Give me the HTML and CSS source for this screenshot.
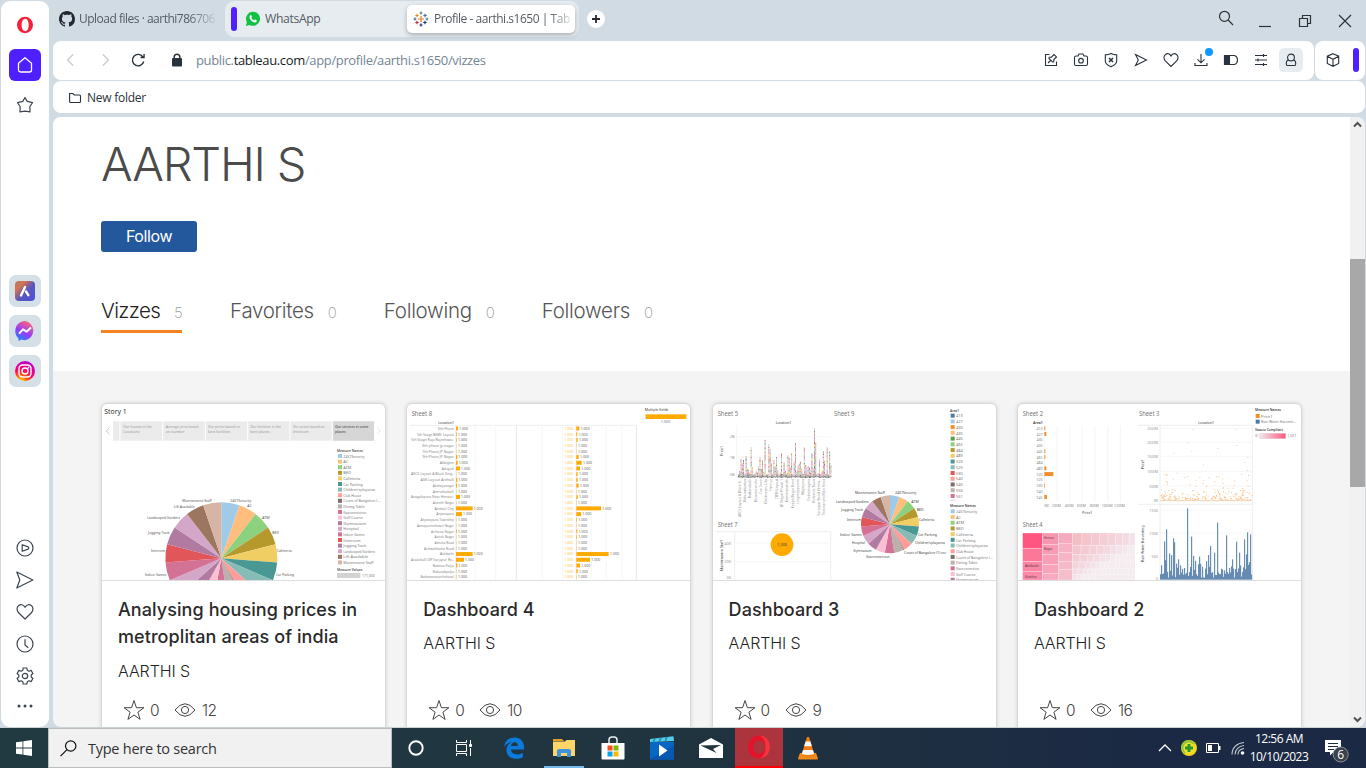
FILE: index.html
```html
<!DOCTYPE html>
<html lang="en">
<head>
<meta charset="utf-8">
<title>Profile - aarthi.s1650 | Tableau Public</title>
<link rel="stylesheet" href="styles.css">
</head>
<body>
<div class="desktop">
  <div class="browser">
    <nav class="sidebar">
      <div class="side-item opera"><svg width="18" height="18" viewBox="0 0 18 18"><path fill="#fa1e38" fill-rule="evenodd" d="M9 .8a8 8.2 0 1 0 0 16.4A8 8.2 0 0 0 9 .8zM9.3 2.8c2 0 3.400 2.700 3.400 6.200s-1.400 6.200-3.400 6.200S5.600 12.500 5.600 9 7.300 2.800 9.300 2.800z"/></svg></div>
      <div class="side-item home"><svg width="18" height="18" viewBox="0 0 18 18" fill="none" stroke="#fff" stroke-width="1.300"><path d="M2.500 7.300 9 1.700l6.500 5.600v6.700a2 2 0 0 1-2 2h-9a2 2 0 0 1-2-2z" stroke-linejoin="round"/></svg></div>
      <div class="side-item pin"><svg width="18" height="18" viewBox="0 0 18 18" fill="none" stroke="#3d4650" stroke-width="1.200" stroke-linejoin="round"><path d="M9 1.500 11.200 5.400 16.500 6.700 13.900 10.500 14 15.900 9 15.100 4 15.900 4.100 10.500 1.500 6.700 6.800 5.400z"/></svg></div>
      <div class="apps">
        <div class="app"><svg width="20" height="20" viewBox="0 0 20 20"><defs><linearGradient id="aria" x1="0" y1="0" x2="1" y2="1"><stop offset="0" stop-color="#a08071"/><stop offset=".25" stop-color="#d7734f"/><stop offset=".55" stop-color="#5b57bd"/><stop offset="1" stop-color="#4b4de0"/></linearGradient></defs><rect width="20" height="20" rx="4" fill="url(#aria)"/><path d="M6 14.500 10 6M11 10.500l2.300 3.700" stroke="#fff" stroke-width="2.400" stroke-linecap="round"/></svg></div>
        <div class="app"><svg width="20" height="20" viewBox="0 0 20 20"><defs><linearGradient id="msgr" x1=".2" y1="1" x2=".7" y2="0"><stop offset="0" stop-color="#168aff"/><stop offset=".45" stop-color="#963cfa"/><stop offset="1" stop-color="#ff6678"/></linearGradient></defs><path fill="url(#msgr)" d="M10 0a9.700 9.700 0 0 1 0 19.200c-1.200 0-2.300-.2-3.300-.6L3.500 20v-2.600A9.300 9.300 0 0 1 .3 9.800C.3 4.300 4.600 0 10 0z"/><path d="m4.500 12 3.500-3.600 3.500 2.300 4-3.600" fill="none" stroke="#fff" stroke-width="2" stroke-linecap="round" stroke-linejoin="round"/></svg></div>
        <div class="app"><svg width="20" height="20" viewBox="0 0 20 20"><defs><radialGradient id="insta" cx=".3" cy="1" r="1.050"><stop offset="0" stop-color="#ffd600"/><stop offset=".25" stop-color="#ff6a00"/><stop offset=".55" stop-color="#ff0169"/><stop offset="1" stop-color="#b900d8"/></radialGradient></defs><circle cx="10" cy="10" r="10" fill="url(#insta)"/><rect x="4" y="4" width="12" height="12" rx="3.500" fill="none" stroke="#fff" stroke-width="1.400"/><circle cx="10" cy="10" r="3" fill="none" stroke="#fff" stroke-width="1.400"/><circle cx="13.500" cy="6.500" r=".9" fill="#fff"/></svg></div>
      </div>
      <div class="tools">
        <svg viewBox="0 0 18 18"><circle cx="9" cy="9" r="8"/><path d="M6.200 5.700v6.600l6-2.200q1.200-1 0-2.200z"/></svg>
        <svg viewBox="0 0 18 18"><path d="m.8 1 16 8-16 8 3-8z"/></svg>
        <svg viewBox="0 0 18 18"><path d="M9 4.300C7.300 1.200 4.500 1.300 3 2.200.3 4 .6 7.500 2.600 9.800L9 16l6.400-6.200c2-2.300 2.300-5.800-.4-7.600-1.500-.9-4.300-1-6 2.100z"/></svg>
        <svg viewBox="0 0 18 18"><circle cx="9" cy="9" r="8"/><path d="M9 4.300V10l3.300 2.800"/></svg>
        <svg viewBox="0 0 18 18"><circle cx="9" cy="9" r="2.700"/><path d="M7.200 1h3.600l.5 2.300 1.600.9 2.200-.8 1.800 3.100L15.200 8v2l1.700 1.500-1.800 3.100-2.200-.8-1.600.9-.5 2.300H7.200l-.5-2.300-1.600-.9-2.200.8-1.800-3.100L2.800 10V8L1.100 6.500l1.800-3.100 2.200.8 1.600-.9z"/></svg>
        <svg class="dots" viewBox="0 0 18 18"><circle cx="3" cy="9" r="1.500"/><circle cx="9" cy="9" r="1.500"/><circle cx="15" cy="9" r="1.500"/></svg>
      </div>
    </nav>
    <main class="window">
      <header class="tabstrip">
        <div class="tab github">
          <svg width="16" height="16" viewBox="0 0 16 16"><path fill="#24292f" d="M8 0C3.580 0 0 3.580 0 8c0 3.540 2.290 6.530 5.470 7.590.4.070.55-.17.55-.38 0-.19-.01-.82-.01-1.490-2.010.37-2.530-.49-2.690-.94-.09-.23-.48-.94-.82-1.130-.28-.15-.68-.52-.01-.53.63-.01 1.080.58 1.230.82.72 1.210 1.870.87 2.330.66.07-.52.28-.87.51-1.070-1.780-.2-3.640-.89-3.640-3.950 0-.87.31-1.590.82-2.150-.08-.2-.36-1.020.08-2.120 0 0 .67-.21 2.200.82.64-.18 1.320-.27 2-.27s1.360.09 2 .27c1.530-1.040 2.200-.82 2.200-.82.44 1.100.16 1.920.08 2.120.51.56.82 1.270.82 2.150 0 3.070-1.870 3.750-3.650 3.950.29.25.54.73.54 1.480 0 1.070-.01 1.930-.01 2.200 0 .21.15.46.55.38A8.010 8.010 0 0 0 16 8c0-4.420-3.580-8-8-8z"/></svg>
          <span class="t-github">Upload files · aarthi786706</span>
        </div>
        <div class="island">
          <i class="bar"></i>
          <div class="tab whatsapp">
            <svg width="16" height="16" viewBox="0 0 16 16"><path fill="#12c143" d="M8.200.8a7 7 0 1 1-3.400 13.200L.8 15l1.100-3.800A7 7 0 0 1 8.200.8z"/><path fill="#fff" d="M5.300 4.200c.5-.4.900-.2 1.100.3l.5 1.200c.1.400-.5.900-.6 1.100.5 1.200 1.500 2 2.700 2.600.3-.2.700-1 1.100-.9l1.500.8c.5.300 0 1.500-.8 1.900-1.100.6-2.900-.1-4.400-1.500C4.600 8 3.800 5.600 5.300 4.200z"/></svg>
            <span class="t-wa">WhatsApp</span>
          </div>
          <div class="tab active">
            <svg width="16" height="16" viewBox="0 0 16 16" fill="none" stroke-width="1.200"><path stroke="#eb7b24" d="M8 5v6M5 8h6"/><path stroke="#5c8193" d="M8 .5v3M6.500 2h3M14 6.500v3M12.500 8h3"/><path stroke="#e8931f" d="M4 2.800v3.400M2.300 4.500h3.400"/><path stroke="#47709c" d="M12 2.800v3.400M10.300 4.500h3.400M2 6.500v3M.5 8h3"/><path stroke="#c62a44" d="M4 9.800v3.400M2.300 11.500h3.400"/><path stroke="#243a78" d="M12 9.800v3.400M10.300 11.500h3.400M8 12.500v3M6.500 14h3"/></svg>
            <span class="t-active">Profile - aarthi.s1650 | Tab</span>
          </div>
        </div>
        <div class="newtab"><svg width="18" height="18" viewBox="0 0 18 18"><circle cx="9" cy="9" r="9" fill="#fff"/><path d="M9 5v8M5 9h8" stroke="#202a33" stroke-width="1.800"/></svg></div>
        <div class="controls">
          <svg class="find" width="16" height="16" viewBox="0 0 16 16"><circle cx="6.500" cy="6.300" r="5"/><path d="m10.200 10 4.800 5"/></svg>
          <svg width="14" height="14" viewBox="0 0 14 14"><path d="M1 12.500h12"/></svg>
          <svg width="14" height="14" viewBox="0 0 14 14"><path d="M1.500 4.500h8v8h-8zM4.500 4.500v-3h8v8h-3"/></svg>
          <svg width="14" height="14" viewBox="0 0 14 14"><path d="m1 1 12 12M13 1 1 13"/></svg>
        </div>
      </header>
      <section class="toolbar">
        <div class="address">
          <div class="history">
            <svg class="off" viewBox="0 0 14 14"><path d="M9 2 4 7l5 5"/></svg>
            <svg class="off" viewBox="0 0 14 14"><path d="m5 2 5 5-5 5"/></svg>
            <svg viewBox="0 0 14 14"><path d="M12 8.300A5 5 0 1 1 11.300 4.300M12.300 1.800v3H9.300"/></svg>
          </div>
          <svg class="lock" width="12" height="14" viewBox="0 0 12 14"><path d="M3.200 6V4a2.800 2.800 0 0 1 5.600 0v2" fill="none" stroke="#29333d" stroke-width="1.500"/><rect x="1" y="5" width="10" height="8.500" rx="1" fill="#29333d"/></svg>
          <div class="url">public.<b>tableau.com</b>/app/profile/aarthi.s1650/vizzes</div>
          <div class="actions">
            <svg viewBox="0 0 16 16"><path d="M6.500 2.500h-4v11h11v-4M5 11l3-3M6 6.500 9.500 10l1.300-.3V7.500l2.700-2.600-2.500-2.400-2.600 2.700H6.200z"/></svg>
            <svg viewBox="0 0 16 16"><path d="M1.500 5.500q0-1.500 1.500-1.500h2l1-2h4l1 2h2q1.500 0 1.500 1.500V12q0 1.500-1.500 1.500H3q-1.500 0-1.500-1.500z"/><circle cx="8" cy="8.700" r="2.300"/></svg>
            <svg viewBox="0 0 16 16"><path d="M8 1.500c2 1.100 4 1.400 5.700 1.400v6.300c0 2.800-3.200 4.300-5.700 5.600-2.500-1.300-5.700-2.800-5.700-5.600V2.900C4 2.900 6 2.600 8 1.500z"/><path stroke-width="1.600" d="m6 6 4 4M10 6l-4 4"/></svg>
            <svg viewBox="0 0 16 16"><path d="m2.500 2.500 11 5.500-11 5.500L5.300 8z"/></svg>
            <svg viewBox="0 0 16 16"><path d="M8 4C6.500 1.300 4.200 1.300 2.800 2.200.2 4 .6 7 2.300 8.900L8 14.400l5.700-5.500c1.700-1.900 2.100-4.900-.5-6.700-1.400-.9-3.700-.9-5.200 1.800z"/></svg>
            <span class="download"><svg viewBox="0 0 16 16"><path d="M8 2v8.500M4.500 7.300 8 10.800l3.500-3.500M2 11v2.500h12V11"/></svg><i></i></span>
            <svg viewBox="0 0 16 16"><path d="M1.500 3.500h10q3 1 3 4.500t-3 4.500h-10z"/><path fill="#29333d" d="M1.500 3.500h5v9h-5z"/></svg>
            <svg viewBox="0 0 16 16"><path d="M2 3.500h12M2 8h12M2 12.500h12M10.500 2v3M5 6.500v3M10.500 11v3"/></svg>
            <span class="user"><svg viewBox="0 0 16 16"><circle cx="8" cy="5.500" r="3.400"/><path d="M5.500 7.800C3.300 9 3 11 3.500 12.800q.2.700 1 .7h7q.8 0 1-.7c.5-1.800.2-3.800-2-5"/></svg></span>
          </div>
        </div>
        <div class="extras">
          <svg width="16" height="16" viewBox="0 0 16 16" fill="none" stroke="#29333d" stroke-width="1.100"><path d="m8 1.700 5.700 2.500v7.300L8 14.300l-5.700-2.800V4.200zM2.300 4.200 8 7.300l5.700-3.100M8 7.300v7"/></svg>
          <i class="bar"></i>
        </div>
      </section>
      <section class="bookmarks">
        <svg width="14" height="12" viewBox="0 0 14 12" fill="none" stroke="#29333d" stroke-width="1.100"><path d="M1.600 1.500h3.200l1.500 1.500h5.200q1 0 1 1v5.500q0 1-1 1H2.600q-1 0-1-1z"/></svg>
        <span class="t-folder">New folder</span>
      </section>
      <section class="viewport">
        <div class="page">
          <div class="profile">
            <h1>AARTHI S</h1>
            <button class="follow">Follow</button>
            <ul class="sections">
              <li class="on"><span>Vizzes</span><em>5</em></li>
              <li><span>Favorites</span><em>0</em></li>
              <li><span>Following</span><em>0</em></li>
              <li><span>Followers</span><em>0</em></li>
            </ul>
          </div>
          <div class="cards">
            <article class="card"><svg class="thumb" id="viz1" viewBox="18 24 852 528"></svg><div class="info"><h2 class="long">Analysing housing prices in metroplitan areas of india</h2><p>AARTHI S</p><div class="stats"><svg class="star" viewBox="0 0 22 22"><path d="m11 1.500 2.400 7.200h7.500l-6 4.500 2.200 7.200-6.100-4.400-6.100 4.400 2.200-7.200-6-4.500h7.500z"/></svg><span>0</span><svg class="eye" viewBox="0 0 22 14"><path d="M1 7q10-12.500 20 0Q11 19.500 1 7z"/><circle cx="11" cy="7" r="3.600"/></svg><span>12</span></div></div></article>
            <article class="card"><svg class="thumb" id="viz2" viewBox="21 24 852 528"></svg><div class="info"><h2>Dashboard 4</h2><p>AARTHI S</p><div class="stats"><svg class="star" viewBox="0 0 22 22"><path d="m11 1.500 2.400 7.200h7.500l-6 4.500 2.200 7.200-6.100-4.400-6.100 4.400 2.200-7.200-6-4.500h7.500z"/></svg><span>0</span><svg class="eye" viewBox="0 0 22 14"><path d="M1 7q10-12.500 20 0Q11 19.500 1 7z"/><circle cx="11" cy="7" r="3.600"/></svg><span>10</span></div></div></article>
            <article class="card"><svg class="thumb" id="viz3" viewBox="21 24 852 528"></svg><div class="info"><h2>Dashboard 3</h2><p>AARTHI S</p><div class="stats"><svg class="star" viewBox="0 0 22 22"><path d="m11 1.500 2.400 7.200h7.500l-6 4.500 2.200 7.200-6.100-4.400-6.100 4.400 2.200-7.200-6-4.500h7.500z"/></svg><span>0</span><svg class="eye" viewBox="0 0 22 14"><path d="M1 7q10-12.500 20 0Q11 19.500 1 7z"/><circle cx="11" cy="7" r="3.600"/></svg><span>9</span></div></div></article>
            <article class="card"><svg class="thumb" id="viz4" viewBox="18 24 852 528"></svg><div class="info"><h2>Dashboard 2</h2><p>AARTHI S</p><div class="stats"><svg class="star" viewBox="0 0 22 22"><path d="m11 1.500 2.400 7.200h7.500l-6 4.500 2.200 7.200-6.100-4.400-6.100 4.400 2.200-7.200-6-4.500h7.500z"/></svg><span>0</span><svg class="eye" viewBox="0 0 22 14"><path d="M1 7q10-12.500 20 0Q11 19.500 1 7z"/><circle cx="11" cy="7" r="3.600"/></svg><span>16</span></div></div></article>
          </div>
        </div>
        <div class="scrollbar">
          <svg viewBox="0 0 15 15"><path d="m4 9.500 3.500-3.500L11 9.500"/></svg>
          <i></i>
          <svg viewBox="0 0 15 15"><path d="M4 5.500 7.500 9 11 5.500"/></svg>
        </div>
      </section>
    </main>
  </div>
  <footer class="taskbar">
    <div class="start"><svg width="16" height="16" viewBox="0 0 16 16"><path fill="#fff" d="M0 2.300 6.500 1.400v6.200H0zM7.300 1.300 16 0v7.600H7.300zM0 8.400h6.500v6.200L0 13.700zM7.300 8.400H16V16l-8.700-1.300z"/></svg></div>
    <div class="search"><svg width="17" height="17" viewBox="0 0 17 17" fill="none" stroke="#111" stroke-width="1.200"><circle cx="10.700" cy="6" r="5.200"/><path d="M7 9.700.5 16.200"/></svg><span>Type here to search</span></div>
    <div class="task cortana"><svg width="16" height="16" viewBox="0 0 16 16"><circle cx="8" cy="8" r="6.700" fill="none" stroke="#fff" stroke-width="1.900"/></svg></div>
    <div class="task views"><svg width="18" height="16" viewBox="0 0 18 16" fill="none" stroke="#fff"><path d="M1.500 0v2.500h10V0M1.500 16v-2.500h10V16M1.500 4.500h10v7h-10zM15.500 0v4M15.500 8v8"/><path fill="#fff" d="M14.500 4.500h2v2h-2z"/></svg></div>
    <div class="task edge"><svg width="20" height="22" viewBox="0 0 20 22"><path fill="#0a7bdc" d="M0 10C.8 4 4.800.5 10.400.5c6 0 9.600 4.200 9.600 9.800v2.300H7c.2 3.400 3 4.800 6.200 4.800 2 0 3.900-.6 5.700-1.500v4.300c-2 1-4.500 1.500-7 1.500C6 21.700 2.400 18 2.400 13.100c0-3.500 1.900-6.400 5.200-7.900C4.400 5.500 1.600 7.200 0 10zm7.100-.9h6.800c0-2.300-1-3.900-3.200-3.900S7.200 7 7.100 9.100z"/></svg></div>
    <div class="task folder"><svg width="22" height="20" viewBox="0 0 22 20"><path fill="#e3a21a" d="M0 1h9l2 2H0z"/><path fill="#ffd567" d="M0 3.500h12L13.500 2H22v16H0z"/><path fill="#3f93dc" d="M4 19v-6q0-2 2-2h10q2 0 2 2v6h-4v-4H8v4z"/></svg></div>
    <div class="task"><svg width="24" height="24" viewBox="0 0 24 24"><path fill="none" stroke="#e8eef0" stroke-width="1.500" d="M8 7V4q0-3 3-3h2q3 0 3 3v3"/><path fill="#fff" d="M.5 7h23v15.500q0 1-1 1h-21q-1 0-1-1z"/><path fill="#f25022" d="M6.500 9.500h5v5h-5z"/><path fill="#7fba00" d="M12.500 9.500h5v5h-5z"/><path fill="#00a4ef" d="M6.500 15.500h5v5h-5z"/><path fill="#ffb900" d="M12.500 15.500h5v5h-5z"/></svg></div>
    <div class="task"><svg width="24" height="24" viewBox="0 0 24 24"><path fill="#0866c5" d="M0 6h24v16.500q0 1-1 1H1q-1 0-1-1z"/><path fill="#0a57b0" d="m0 23 24-14v14.500H1z"/><path fill="#55cde9" d="M0 3 23.500.2 24 5 0 6z"/><path d="m5 2.500-2 4M11 1.800l-2 4M17 1l-2 4.500" stroke="#1688bc" stroke-width="1.500"/><path fill="#fff" d="m9 8.500 8.500 6-8.500 6z"/></svg></div>
    <div class="task"><svg width="24" height="20" viewBox="0 0 24 20"><path fill="#fff" d="M0 6.500 12 0l12 6.500V20H0z"/><path fill="#21343e" d="M1.500 7.500 22 7 14 11l3.500 4z"/></svg></div>
    <div class="task operatask"><svg width="24" height="24" viewBox="0 0 24 24"><ellipse cx="12" cy="12" rx="8.500" ry="9" fill="none" stroke="#e5122b" stroke-width="5"/><path d="M12 .5c6.500 0 11 5 11 11.500S18.500 23.500 12 23.500c5-2 6.500-6 6.500-11.500S17 2.500 12 .5z" fill="#ff4b50" opacity=".6"/></svg></div>
    <div class="task"><svg width="22" height="24" viewBox="0 0 22 24"><path fill="#ef8b18" d="M3 17h16l2 5.500q0 1-1 1H2q-1 0-1-1z"/><path fill="#f47d12" d="M10 1h2l5.500 18q-6.500 4-13 0z"/><path fill="#f4f4f2" d="M8.500 5.500h5l1.400 4.800H7.100zM6 14h10l1.200 4q-6 2-12.400 0z"/></svg></div>
    <div class="tray">
      <svg width="14" height="8" viewBox="0 0 14 8" fill="none" stroke="#fff" stroke-width="1.300"><path d="m1 7 6-6 6 6"/></svg>
      <svg width="16" height="16" viewBox="0 0 16 16"><circle cx="8" cy="8" r="8" fill="#f4d51d"/><path fill="#90c936" d="M0 8a8 8 0 0 1 8-8l6 3L3 14z"/><circle cx="8" cy="8" r="5.500" fill="#f8de2a"/><path fill="#239934" d="M6.500 4h3v2.500H12v3H9.500V12h-3V9.500H4v-3h2.500z"/></svg>
      <svg width="15" height="10" viewBox="0 0 15 10"><path fill="none" stroke="#fff" d="M.5.5h12v9H.500z"/><path fill="#fff" d="M2 2h4v6H2zM13 3h1.500v4H13z"/></svg>
      <svg width="14" height="14" viewBox="0 0 14 14" fill="none" stroke="#c6ccd4" stroke-width="1.100"><path d="M1 13.500C1 6.500 6 2 13 1.500M4 13.500C4 8.500 8 5 13 4.500M7 13.500C7 10 9.500 8 13 7.500"/><circle cx="11.500" cy="12" r="1.800" fill="#fff" stroke="none"/></svg>
      <div class="clock"><span class="time">12:56 AM</span><span class="date">10/10/2023</span></div>
      <div class="notify"><svg width="24" height="26" viewBox="0 0 24 26"><path fill="#fff" d="M0 2h16v12H8.500L5 17.500V14H0z"/><path stroke="#1b2944" d="M3 5.500h10M3 8.500h10M3 11.500h6"/><circle cx="15.700" cy="16.500" r="7.500" fill="#3b4148" stroke="#8b9198"/><text x="15.700" y="20.700" text-anchor="middle">6</text></svg></div>
    </div>
  </footer>
</div>
<script src="charts.js"></script>
</body>
</html>
```

FILE: styles.css
```css
* { box-sizing: border-box; }
body { margin: 0; font-family: "Open Sans", "Noto Sans", sans-serif; overflow: hidden; }
h1, h2, p, ul { margin: 0; padding: 0; }
svg { display: block; flex: none; }
.desktop { width: 1366px; height: 768px; display: flex; flex-direction: column; background: #d0dbe3; }
.browser { height: 728px; display: flex; gap: 4px; padding: 1px 1px 0; border-bottom: 1px solid #cbd2d6; }

.sidebar { width: 48px; height: 726px; background: #fff; border-radius: 9px; display: flex; flex-direction: column; align-items: center; padding-top: 8px; }
.side-item { width: 32px; height: 32px; display: grid; place-items: center; border-radius: 6px; }
.home { background: #4e1fff; margin-top: 8px; }
.pin { margin-top: 8px; }
.apps { display: flex; flex-direction: column; gap: 8px; margin-top: 154px; }
.app { width: 32px; height: 32px; border-radius: 7px; background: #d5dfe6; display: grid; place-items: center; }
.tools { margin-top: 152px; display: flex; flex-direction: column; gap: 14px; }
.tools svg { width: 18px; height: 18px; fill: none; stroke: #3d4650; stroke-width: 1.2; stroke-linejoin: round; }
.tools .dots { fill: #3d4650; stroke: none; margin-top: -2px; }

.window { width: 1312px; display: flex; flex-direction: column; }
.tabstrip { height: 40px; display: flex; }
.tab { display: flex; align-items: center; font-size: 12.2px; color: #545b62; white-space: nowrap; letter-spacing: -0.35px; }
.tab span { line-height: 20px; }
.github { width: 172px; height: 36px; padding-left: 6px; gap: 4px; }
.t-github { font-size: 12px; letter-spacing: -0.5px; -webkit-mask-image: linear-gradient(90deg, #000 80%, #0002); mask-image: linear-gradient(90deg, #000 80%, #0002); }
.island { width: 354px; height: 36px; background: #e7ecf0; border-radius: 9px; display: flex; padding: 0 4px 0 6px; align-items: center; }
.bar { width: 6px; height: 24px; background: #4e1fff; border-radius: 3px; flex: none; }
.whatsapp { width: 170px; padding-left: 8px; gap: 4px; }
.active { width: 168px; height: 28px; padding-left: 6px; gap: 5px; background: #fff; border-radius: 5px; box-shadow: 0 2px 5px #0004; }
.t-active { font-size: 12px; letter-spacing: -0.47px; -webkit-mask-image: linear-gradient(90deg, #000 85%, #0003); mask-image: linear-gradient(90deg, #000 85%, #0003); }
.newtab { padding: 9px 0 0 8px; }
.controls { margin-left: auto; display: flex; gap: 26px; padding: 13px 13px 0 0; }
.controls svg { fill: none; stroke: #2e3236; stroke-width: 1.2; }
.controls .find { margin: -4px -2px 0 0; }

.toolbar { display: flex; gap: 1px; height: 39px; }
.address { width: 1261px; background: #fff; border-radius: 8px; display: flex; align-items: center; padding-bottom: 1px; }
.history { display: flex; gap: 18px; padding-left: 10px; }
.history svg { width: 16px; height: 16px; fill: none; stroke: #29333d; stroke-width: 1.2; }
.history svg:last-child { margin-left: -1px; }
.history .off { stroke: #c9cdd1; }
.lock { margin-left: 25px; }
.url { margin-left: 13px; font-size: 13px; letter-spacing: -0.35px; color: #748596; }
.url b { font-weight: 400; color: #151b21; }
.actions { margin-left: auto; padding-right: 15px; display: flex; align-items: center; gap: 14px; }
.actions svg { width: 16px; height: 16px; fill: none; stroke: #29333d; stroke-width: 1.1; }
.download { position: relative; }
.download i { position: absolute; width: 8px; height: 8px; border-radius: 50%; background: #0d99ff; left: 12px; top: -4px; }
.user { width: 24px; height: 24px; margin: 0 -4px; background: #e7ecf0; border-radius: 5px; display: grid; place-items: center; }
.extras { width: 50px; background: #fff; border-radius: 8px; display: flex; align-items: center; padding: 0 0 1px 10px; gap: 12px; }
.bookmarks { margin-top: 1px; height: 32px; background: #fff; border-radius: 8px; display: flex; align-items: center; padding: 1px 0 0 15px; gap: 5px; font-size: 12px; letter-spacing: -0.25px; color: #29333d; }

.viewport { margin-top: 4px; height: 610px; border-radius: 8px; overflow: hidden; display: flex; background: #f4f4f4; }
.page { width: 1297px; font-family: Inter, "Liberation Sans", sans-serif; color: #333; }
.profile { height: 254px; background: #fff; padding: 16px 0 0 48px; }
h1 { font-size: 47px; font-weight: 300; line-height: 62px; letter-spacing: -1.2px; color: #4b4b4b; }
.follow { display: block; margin-top: 26px; width: 96px; height: 31px; border: 0; border-radius: 3px; background: #24589c; color: #fff; font: 400 16px/31px Inter, sans-serif; padding: 0; letter-spacing: -0.4px; }
.sections { display: flex; list-style: none; gap: 48px; margin-top: 44px; font-size: 20.5px; font-weight: 300; color: #555; }
.sections li { height: 37px; display: flex; gap: 14px; align-items: baseline; line-height: 30px; }
.sections span { letter-spacing: -0.3px; }
.sections em { font-style: normal; font-size: 15px; width: 8px; letter-spacing: -1px; font-weight: 200; color: #999; }
.sections .on { color: #222; border-bottom: 3px solid #f58220; }
.sections .on span { letter-spacing: -0.65px; }
.cards { display: grid; grid-template-columns: repeat(4, 285px); gap: 20.3px; padding: 32px 0 0 48px; }
.card { height: 380px; border: 1px solid #d8d8d8; border-radius: 6px 6px 0 0; background: #fff; overflow: hidden; box-shadow: 0 0 4px #0002; }
.thumb { width: 284px; height: 177px; border-bottom: 1px solid #ddd; }
.thumb text { font-family: "Noto Sans", sans-serif; }
.info { padding: 15px 16px; height: 190px; }
h2 { font-size: 18px; line-height: 27px; font-weight: 500; letter-spacing: 0.08px; color: #2a2a2a; }
.info p { margin-top: 7px; font-size: 16px; line-height: 26px; font-weight: 300; letter-spacing: -0.1px; color: #222; }
.long ~ p { margin-top: 8px; }
.stats { margin-top: 41px; height: 26px; display: flex; align-items: center; padding-left: 5px; font-size: 15.5px; font-weight: 300; letter-spacing: -0.6px; color: #444; }
.long ~ .stats { margin-top: 13px; }
.stats svg { fill: none; stroke: #444; stroke-width: 1; }
.star { width: 22px; height: 22px; margin-right: 5px; }
.eye { width: 22px; height: 14px; margin: 0 6px 0 15px; }
.scrollbar { width: 15px; background: #f1f1f1; display: flex; flex-direction: column; }
.scrollbar i { width: 15px; height: 228px; background: #a8a8a8; margin: 127px 0 225px; }
.scrollbar svg { width: 15px; height: 15px; fill: none; stroke: #505050; stroke-width: 2; }

.taskbar { height: 40px; display: flex; background: linear-gradient(90deg, #213a42, #20343f 50%, #1b2944 85%); color: #fff; }
.start { width: 48px; display: grid; place-items: center; }
.search { width: 344px; background: #f1f1f1; border: 1px solid #b9bec0; display: flex; align-items: center; gap: 11px; padding-left: 11px; color: #333; font-size: 14.5px; }
.search span { letter-spacing: -0.25px; }
.task { width: 49px; display: grid; place-items: center; }
.cortana { width: 48px; }
.views { width: 48px; }
.edge { width: 52px; }
.folder { box-shadow: inset 0 -2px #76b9ed; width: 40px; margin: 0 4px; }
.operatask { width: 48px; background: #ac353d; border-bottom: 2px solid #f00; }
.operatask + .task { width: 50px; }
.tray { margin-left: auto; display: flex; align-items: center; padding-right: 17px; }
.tray svg:nth-child(2) { margin-left: 9px; }
.tray svg:nth-child(3) { margin-left: 9px; }
.tray svg:nth-child(4) { margin-left: 10px; }
.clock { width: 68px; display: flex; flex-direction: column; align-items: center; font-size: 12px; line-height: 18px; }
.clock span { letter-spacing: -0.5px; white-space: nowrap; }
.notify { margin: 6px 0 0 12px; }
.notify text { font: 12px "Open Sans", sans-serif; fill: #fff; }
```

FILE: charts.js
```js
const COLORS = ['#a0cbe8', '#ffbe7d', '#8cd17d', '#b6992d', '#f1ce63', '#499894', '#86bcb6', '#ff9d9a', '#79706e', '#bab0ac',
  '#d37295', '#fabfd2', '#b07aa1', '#d4a6c8', '#d37295', '#e15759', '#b07aa1', '#d4a6c8', '#9d7660', '#d7b5a6'];
const NAMES = ['24X7Security', 'AC', 'ATM', 'BED', 'Cafeteria', 'Car Parking', "Children'splayarea", 'Club House', 'Count of Bangalore (...',
  'Dining Table', 'Gasconnection', 'Golf Course', 'Gymnasium', 'Hospital', 'Indoor Games', 'Intercom', 'Jogging Track', 'Landscaped Gardens', 'Lift Available', 'Maintenance Staff'];

let seed = 7;
const rnd = () => (seed = (seed * 16807) % 2147483647) / 2147483647;
const rect = (x, y, w, h, fill, extra = '') => `<rect x="${x}" y="${y}" width="${w}" height="${h}" fill="${fill}" ${extra}/>`;
const line = (x1, y1, x2, y2, c = '#e6e6e6', w = 2) => `<path d="M${x1} ${y1}L${x2} ${y2}" stroke="${c}" stroke-width="${w}"/>`;
const text = (x, y, s, o = {}) => `<text x="${x}" y="${y}" font-size="${o.size || 12}" fill="${o.fill || '#777'}" text-anchor="${o.anchor || 'start'}" font-weight="${o.weight || 400}"${o.w ? ` textLength="${o.w}" lengthAdjust="spacingAndGlyphs"` : ''}${o.rot ? ` transform="rotate(-90 ${x} ${y})"` : ''}>${s}</text>`;

function pie(cx, cy, r) {
  let a = 0, out = '';
  COLORS.forEach((c, i) => {
    const b = a + (i === 8 ? 2 : 358 / 19) * Math.PI / 180;
    const p = t => `${(cx + r * Math.sin(t)).toFixed(1)} ${(cy - r * Math.cos(t)).toFixed(1)}`;
    out += `<path fill="${c}" d="M${cx} ${cy}L${p(a)}A${r} ${r} 0 0 1 ${p(b)}z"/>`;
    a = b;
  });
  return out;
}
const legend = (x, y, names, colors, step = 16.8) => names.map((n, i) => rect(x, y + i * step - 6, 12, 12, colors[i]) + text(x + 16, y + i * step + 5, n, { w: n.length > 9 ? n.length * (n.length > 20 ? 4.8 : 5.3) : 0 })).join('');

function story() {
  let s = text(25, 53, 'Story 1', { size: 19, fill: '#333', w: 67 });
  s += rect(51, 76, 783, 58, '#ebebeb') + rect(711, 76, 123, 58, '#d6d6d6');
  [72, 200, 328, 455, 582, 709].forEach(x => s += line(x, 76, x, 134, '#fff', 3));
  [[82, 'Our houses in the', 'Locations', 85], [209, 'Average price based', 'on number', 98], [336, 'Our prices based on', 'best facilities', 96], [463, 'Our facilities in the', 'best places.', 92], [591, 'Our prices based on', 'Intercom', 95], [717, 'Our services in some', 'places', 100]]
    .forEach(([x, a, b, w], i) => s += text(x, 97, a, { fill: i === 5 ? '#333' : '#999', w, size: 11 }) + text(x, 112, b, { fill: i === 5 ? '#333' : '#999', size: 11 }));
  s += '<path d="M40 95L31 105L40 115" fill="none" stroke="#aaa" stroke-width="2"/><path d="M844 95L853 105L844 115" fill="none" stroke="#ddd" stroke-width="2"/>';
  s += text(723, 167, 'Measure Names', { fill: '#555', weight: 600, w: 78 });
  s += legend(726, 180, NAMES, COLORS) + text(723, 526, 'Measure Values', { weight: 600, fill: '#555', w: 76 }) + rect(723, 531, 70, 15, '#d3d3d3') + text(798, 543, '171,000', { w: 38 });
  s += pie(376, 487, 168);
  [[403, 317, '24X7Security', 63], [454, 334, 'AC', 13], [498, 368, 'ATM', 23], [529, 415, 'BED', 20], [542, 469, 'Cafeteria', 45], [540, 540, 'Car Parking', 54]].forEach(([x, y, t, w]) => s += text(x, y, t, { fill: '#555', w }));
  [[347, 317, 'Maintenance Staff', 88], [296, 335, 'Lift Available', 63], [252, 368, 'Landscaped Gardens', 98], [221, 415, 'Jogging Track', 65], [207, 469, 'Intercom', 42], [211, 540, 'Indoor Games', 64]].forEach(([x, y, t, w]) => s += text(x, y, t, { anchor: 'end', fill: '#555', w }));
  return s;
}

function bars() {
  let s = text(35, 59, 'Sheet 8', { size: 19, fill: '#777', w: 61 }) + text(162, 85, 'Location1', { anchor: 'end', fill: '#333', w: 47, size: 11 });
  s += text(734, 46, 'Multiple fields', { fill: '#333', w: 71 }) + rect(737, 55, 122, 14, '#ffaa00') + text(782, 81, '1.000', { w: 28 });
  s += line(30, 88, 710, 88);
  [168, 349, 529, 709].forEach(x => s += line(x, 88, x, 552, '#dedede'));
  [226, 287, 427, 488, 574, 619, 666].forEach(x => s += line(x, 88, x, 552, '#f3f3f3'));
  const names = ['6th Phase', '5th Stage BEML Layout', '5th Stage Raja Rajeshwar..', '6th phase jp nagar', '7th Phase JP Nagar', '9th Phase JP Nagar', 'Abbigere', 'Adugodi', 'AECS Layout A Block Sing..', 'AGS Layout Arehalli', 'Akshayanagar', 'Amruthahalli', 'Anagalapura Near Hennur..', 'Ananth Nagar', 'Anekal City', 'Anjanapura', 'Anjanapura Township', 'Annapurneshwari Nagar', 'Arrhana Nagar', 'Ashok Nagar', 'Ashoka Road', 'Ashwathkatte Road', 'Attibele', 'Avalahalli Off Sarjapur Ro..', 'Babusa Palya', 'Babusabpalya', 'Badamanavarthekaval'];
  const left = [6, 2, 2, 1, 1, 4, 5, 12, 1, 4, 3, 1, 12, 1, 50, 18, 1, 1, 2, 1, 1, 1, 50, 24, 4, 1, 1];
  const right = [9, 3, 4, 1, 1, 7, 16, 11, 4, 4, 7, 1, 4, 1, 74, 14, 2, 1, 3, 2, 1, 1, 97, 41, 11, 4, 1];
  names.forEach((n, i) => {
    const y = 97.5 + i * 17.12;
    s += text(162, y + 4, n, { anchor: 'end', fill: '#888', size: 11, w: Math.min(129, n.length * 5.3) });
    s += rect(168, y - 6, left[i], 12, '#ffaa00') + text(Math.max(174, 171 + left[i]), y + 4, '1.000', { w: 27, size: 11, fill: '#666' });
    s += text(493, y + 4, '1.000', { fill: '#ffbf4a', w: 27, size: 11 });
    s += rect(529, y - 6, right[i], 12, '#ffaa00') + text(533 + right[i], y + 4, '1.000', { w: 27, size: 11, fill: '#666' });
  });
  return s;
}

function mixed() {
  let s = text(35, 59, 'Sheet 5', { size: 19, fill: '#777', w: 61 }) + text(384, 59, 'Sheet 9', { size: 19, fill: '#777', w: 61 }) + text(35, 394, 'Sheet 7', { size: 19, fill: '#777', w: 60 });
  s += text(209, 84, 'Location1', { fill: '#333', w: 47 }) + line(92, 88, 92, 243, '#eee') + line(92, 243, 375, 243, '#ccc');
  [[122, '2B'], [183, '1B'], [236, '0B']].forEach(([y, t]) => s += line(92, y, 374, y, '#f1f1f1') + text(86, y + 5, t, { anchor: 'end', fill: '#999' }));
  s += text(50, 179, 'Price1', { rot: 1, fill: '#444', w: 29 });
  const tall = { 104: 188, 112: 192, 120: 181, 133: 154, 176: 132, 187: 145, 191: 160, 211: 183, 224: 170, 247: 186, 257: 170, 268: 141, 295: 153, 316: 172, 323: 97, 327: 140, 349: 166, 361: 154, 371: 165 };
  for (let x = 96; x < 375; x += 3.8) {
    let top = 236 - rnd() * rnd() * 70;
    for (const k in tall) if (Math.abs(k - x) < 1.9) top = tall[k];
    for (let y = top; y < 243; y += 4) s += rect(x, y, 2.8, 3.5, y > 237 ? '#666' : COLORS[Math.floor(rnd() * 20)]);
  }
  [['AECS Layout A Block Si..', 114], ['Babusabpalya', 68], ['Battarahalli', 58], ['Bommasandra', 70], ['Cox Town', 45], ['Electronics City', 74], ['Hennur', 35], ['ITPB Layout', 60], ['JP Nagar Phase 1', 83], ['Kammanahalli', 70], ['Koppa Begur Road', 88], ['Lingarajapuram', 74], ['Nagarjuna', 48], ['Padmanagara', 65], ['Richards Town', 71], ['Sarjapur Road Yemlu..', 110], ['Thanisandra Main Road', 110]]
    .forEach(([n, w], i) => s += text(104 + i * 15.9, 249, n, { rot: 1, anchor: 'end', size: 11, w, fill: '#999' }));
  s += line(30, 407, 374, 407) + line(86, 407, 86, 552) + line(374, 407, 374, 552) + line(86, 497, 374, 497, '#f0f0f0') + line(86, 442, 374, 442, '#f5f5f5');
  [[447, '40K'], [502, '20K'], [549, '0K']].forEach(([y, t]) => s += text(76, y, t, { anchor: 'end', fill: '#999' }));
  s += text(50, 525, 'Maintenance Staff', { rot: 1, fill: '#333', w: 92, size: 11 });
  s += '<circle cx="228" cy="446" r="34" fill="#ffaa00"/>' + text(214, 451, '1,000', { fill: '#444', w: 29 });
  s += pie(552, 385, 87);
  [[567, 295, '24X7Security', 64], [616, 321, 'ATM', 22], [632, 346, 'BED', 21], [639, 375, 'Cafeteria', 46], [636, 419, 'Car Parking', 57], [627, 445, "Children'splayarea", 90], [594, 475, 'Count of Bangalore (1).csv', 126]].forEach(([x, y, t, w]) => s += text(x, y, t, { fill: '#444', w }));
  [[537, 295, 'Maintenance Staff', 90], [488, 321, 'Landscaped Gardens', 98], [471, 346, 'Jogging Track', 65], [465, 375, 'Intercom', 42], [467, 419, 'Indoor Games', 65], [477, 445, 'Hospital', 39], [497, 467, 'Gymnasium', 55], [551, 486, 'Gasconnection', 71]].forEach(([x, y, t, w]) => s += text(x, y, t, { fill: '#444', anchor: 'end', w }));
  s += text(732, 47, 'Area1', { fill: '#444', weight: 600, w: 27 });
  s += legend(734, 59, ['413', '427', '430', '435', '445', '465', '484', '489', '520', '525', '530', '540', '545', '550', '551'], ['#4e79a7', '#a0cbe8', '#f28e2b', '#ffbe7d', '#59a14f', '#8cd17d', '#b6992d', '#f1ce63', '#499894', '#86bcb6', '#e15759', '#ff9d9a', '#79706e', '#bab0ac', '#d37295'], 17.2);
  s += rect(734, 311, 12, 3, '#fabfd2') + text(732, 332, 'Measure Names', { fill: '#444', weight: 600, w: 78 });
  return s + legend(734, 346, NAMES.slice(0, 13), COLORS, 17.1);
}

function rain() {
  let s = text(32, 59, 'Sheet 2', { size: 19, fill: '#777', w: 61 }) + text(381, 59, 'Sheet 3', { size: 19, fill: '#777', w: 61 }) + text(32, 394, 'Sheet 4', { size: 19, fill: '#777', w: 60 });
  s += text(92, 85, 'Area1', { anchor: 'end', fill: '#333', weight: 600, w: 29 });
  [97, 135, 173, 211, 249, 287, 325].forEach(x => s += line(x, 90, x, 318, '#f0f0f0'));
  const w = [3, 6, 0, 0, 3, 3, 0, 6, 27, 0, 2, 0, 8];
  ['413', '427', '430', '435', '445', '465', '484', '489', '520', '525', '530', '540', '545'].forEach((n, i) => s += text(92, 102 + i * 17.15, n, { anchor: 'end', size: 11, fill: '#888' }) + rect(97, 91 + i * 17.15, w[i], 12, '#f28e2b'));
  ['0M', '200M', '400M', '600M', '800M', '1000M', '1200M'].forEach((n, i) => s += text([97, 120, 158, 195, 234, 269, 306][i], 332, n, { size: 11, w: n.length * 6.6, fill: '#888' }));
  s += text(211, 353, 'Price1', { fill: '#444', w: 30 });
  s += text(559, 83, 'Location1', { fill: '#333', w: 47 }) + line(378, 88, 721, 88) + line(378, 325, 721, 325) + line(444, 88, 444, 552) + line(721, 88, 721, 552);
  [[97, '2500M'], [139, '2000M'], [181, '1500M'], [226, '1000M'], [270, '500M'], [314, '0M'], [342, '1500'], [411, '1000'], [480, '500'], [547, '0']].forEach(([y, t]) => s += line(444, y, 721, y, '#f3f3f3') + text(438, y + 5, t, { anchor: 'end', w: t.length * 6.5, fill: '#999' }));
  s += text(396, 220, 'Price1', { rot: 1, fill: '#333', w: 30 }) + text(397, 498, 'Rain Water Harvesting', { rot: 1, fill: '#333', w: 110 });
  for (let i = 0; i < 200; i++) s += rect(446 + rnd() * 273, 309 - rnd() * rnd() * rnd() * 130, 3, 2, '#f9a75a');
  for (let x = 446; x < 719; x += 3) s += rect(x, 311 + rnd() * 3, 2.5, 2, '#f28e2b', 'opacity=".75"');
  [[541, 100], [670, 100], [526, 140], [616, 157], [673, 148], [484, 170], [538, 166], [697, 198], [706, 184], [573, 206], [457, 235], [463, 237], [525, 241], [613, 241]].forEach(([x, y]) => s += rect(x, y, 3, 2, '#f28e2b', 'opacity=".7"'));
  const peaks = { 457: 436, 464: 400, 472: 472, 484: 427, 487: 439, 499: 490, 506: 508, 518: 516, 528: 337, 538: 422, 544: 480, 562: 482, 573: 512, 589: 477, 597: 450, 607: 470, 616: 380, 629: 518, 643: 418, 661: 490, 673: 437, 683: 470, 697: 430, 703: 475, 707: 409, 717: 415 };
  for (let x = 446; x < 720; x += 3) {
    let y = 545 - rnd() * rnd() * 70;
    for (const k in peaks) if (Math.abs(k - x) <= 1.5) y = peaks[k];
    s += line(x, 551, x, y, '#4e79a7', 3);
  }
  s += rect(32, 411, 337, 141, '#f8e4e9');
  [[32, 411, 59, 46, '#ff5580'], [32, 457, 59, 40, '#fb7899'], [32, 497, 59, 29, '#fa86a3'], [32, 526, 59, 26, '#fa8aa7'], [91, 411, 49, 35, '#f896b0'], [91, 446, 49, 30, '#f99ab2'], [91, 476, 49, 30, '#f89fb7'], [91, 506, 49, 26, '#f8a5bb'], [91, 532, 49, 20, '#f7aabe'], [140, 411, 41, 31, '#f6aabf'], [140, 442, 41, 27, '#f6b2c4'], [140, 469, 41, 27, '#f5b5c6'], [140, 496, 41, 25, '#f5bac9'], [140, 521, 41, 31, '#f4becb']].forEach(([x, y, a, b, c]) => s += rect(x, y, a, b, c, 'stroke="#fff" stroke-opacity=".5" stroke-width="1.5"'));
  let y = 411;
  [37, 27, 23, 21, 17, 16].forEach((h, j) => {
    let x = 181;
    for (let i = 0; x < 366; i++) {
      const cw = Math.max(11, 29 - i * 1.5 - j * 3), g = Math.min(236, 190 + i * 5 + j * 7);
      s += rect(x, y, Math.min(cw, 369 - x), h, `rgb(244 ${g} ${Math.min(238, g + 8)})`, 'stroke="#fff" stroke-opacity=".5" stroke-width="1.5"');
      x += cw;
    }
    y += h;
  });
  [[96, 430, 'Hennur'], [96, 462, 'Begur'], [39, 513, 'Attibele'], [39, 546, 'Kanthur']].forEach(([x, q, t]) => s += text(x, q, t, { fill: '#623945', w: t.length * 5.1 }));
  s += text(729, 46, 'Measure Names', { fill: '#444', weight: 600, w: 78 }) + legend(731, 60, ['Price1', 'Rain Water Harvesti...'], ['#f28e2b', '#4e79a7'], 17);
  s += text(729, 104, 'Vaastu Compliant', { fill: '#444', weight: 600, w: 84 });
  s += '<defs><linearGradient id="heat"><stop stop-color="#f0eeee"/><stop offset="1" stop-color="#ff5580"/></linearGradient></defs>' + rect(741, 112, 80, 16, 'url(#heat)', 'stroke="#ccc"') + text(730, 124, '0') + text(826, 124, '1,021', { w: 27 });
  return s;
}

[story, bars, mixed, rain].forEach((draw, i) => { document.getElementById('viz' + (i + 1)).innerHTML = draw(); });
```
